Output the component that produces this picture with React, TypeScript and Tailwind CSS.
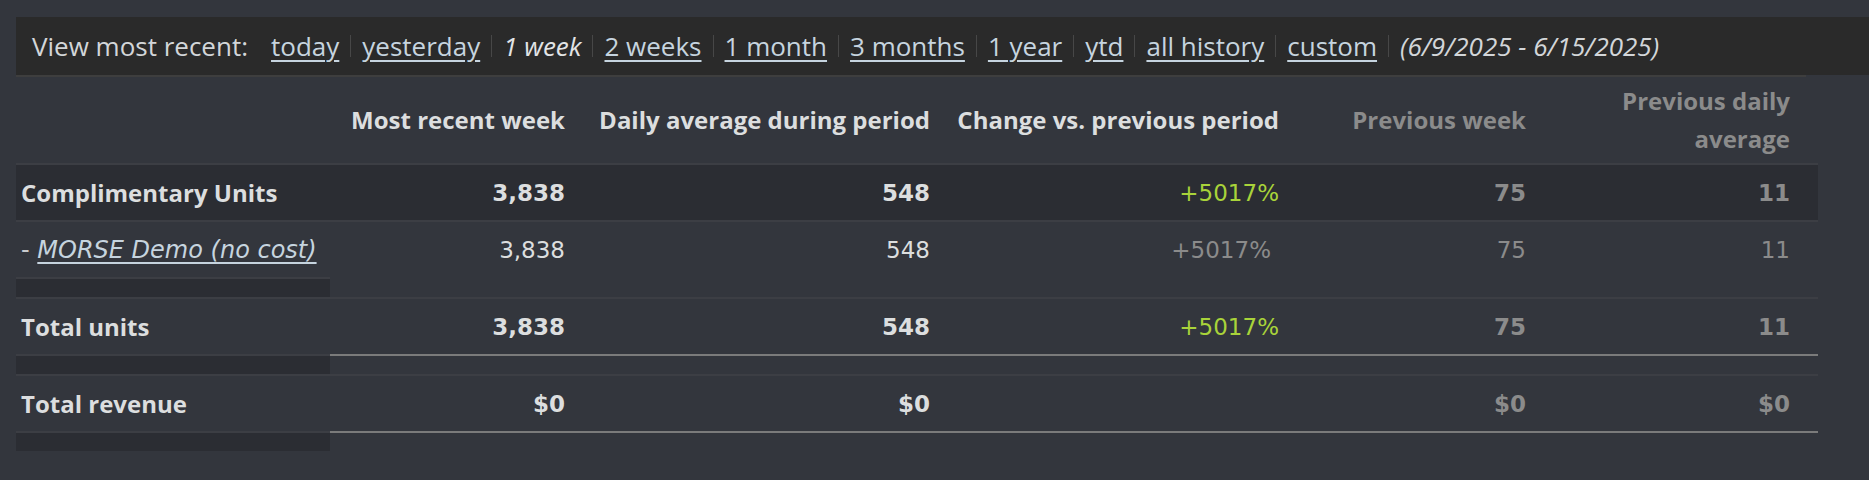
import React from "react";

const ranges = [
  { label: "today", link: true },
  { label: "yesterday", link: true },
  { label: "1 week", link: false },
  { label: "2 weeks", link: true },
  { label: "1 month", link: true },
  { label: "3 months", link: true },
  { label: "1 year", link: true },
  { label: "ytd", link: true },
  { label: "all history", link: true },
  { label: "custom", link: true },
];

const cols = "grid grid-cols-[314px_245px_365px_349px_247px_282px]";
const num = "font-['DejaVu_Sans',_'Open_Sans',_sans-serif] text-[23px]";

type RowProps = {
  label: React.ReactNode;
  values: string[];
  bold?: boolean;
  dark?: boolean;
  subtle?: boolean;
};

function DataRow({ label, values, bold = true, dark = false, subtle = false }: RowProps) {
  const weight = bold ? "font-bold" : "font-normal";
  return (
    <div className={`${cols} h-[57px] items-center border-t-2 border-[#3c3e44] ${dark ? "bg-[#2b2d33]" : ""}`}>
      <div className={`pl-[5px] ${weight} text-[#dcdedf]`}>{label}</div>
      <div className={`pr-[10px] text-right ${num} ${weight} text-[#dcdedf]`}>{values[0]}</div>
      <div className={`pr-[10px] text-right ${num} ${weight} text-[#dcdedf]`}>{values[1]}</div>
      <div
        className={`text-right ${num} font-normal ${subtle ? "pr-[18px] text-[#8b8b8b]" : "pr-[10px] text-[#a9d33a]"}`}
      >
        {values[2]}
      </div>
      <div className={`pr-[10px] text-right ${num} ${weight} text-[#8b8b8b]`}>{values[3]}</div>
      <div className={`pr-[28px] text-right ${num} ${weight} text-[#8b8b8b]`}>{values[4]}</div>
    </div>
  );
}

// strip under a row: only the label column gets the dark fill
function Spacer({ heavy = false }: { heavy?: boolean }) {
  return (
    <div className="flex">
      <div className="w-[314px] border-t-2 border-[#3c3e44] h-[20px] bg-[#2b2d33]" />
      <div className={`flex-1 border-t-2 ${heavy ? "border-[#7b7b7b]" : "border-transparent"}`} />
    </div>
  );
}

export default function App() {
  return (
    <div className="min-h-[480px] bg-[#33363d] pt-[17px] text-[24px] leading-[38px] font-['Open_Sans',_'Liberation_Sans',_sans-serif]">
      {/* range selector */}
      <div className="ml-[16px] flex h-[58px] items-center bg-[#2a2a2a] pl-[16px] text-[26px] text-[#d3d6d9]">
        <span className="mr-[23px]">View most recent:</span>
        {ranges.map((r, i) => (
          <span key={r.label} className="flex items-center">
            {i > 0 && <span className="mx-[11px] h-[22px] w-px bg-[#474747]" />}
            {r.link ? (
              <a href="#" className="text-[#c6d4df] underline decoration-2 underline-offset-[4px]">
                {r.label}
              </a>
            ) : (
              <span className="italic text-[#e2e4e6]">{r.label}</span>
            )}
          </span>
        ))}
        <span className="mx-[11px] h-[22px] w-px bg-[#474747]" />
        <span className="italic text-[#d3d6d9]">(6/9/2025 - 6/15/2025)</span>
      </div>
      <div className="ml-[16px] h-[2px] w-[1790px] bg-[#3e3e3e]" />

      {/* table */}
      <div className="ml-[16px] w-[1802px]">
        <div className={`${cols} h-[86px] items-center font-bold whitespace-nowrap`}>
          <div />
          <div className="pr-[10px] text-right text-[#dcdedf]">Most recent week</div>
          <div className="pr-[10px] text-right text-[#dcdedf]">Daily average during period</div>
          <div className="pr-[10px] text-right text-[#dcdedf]">Change vs. previous period</div>
          <div className="pr-[10px] text-right text-[#8b8b8b]">Previous week</div>
          <div className="pr-[28px] text-right text-[#8b8b8b]">
            Previous daily
            <br />
            average
          </div>
        </div>

        <DataRow label="Complimentary Units" values={["3,838", "548", "+5017%", "75", "11"]} dark />
        <DataRow
          label={
            <span className="font-['DejaVu_Sans',_'Open_Sans',_sans-serif] text-[#c9cbcd]">
              -{" "}
              <a href="#" className="italic text-[#c6d4df] underline decoration-2 underline-offset-[4px]">
                MORSE Demo (no cost)
              </a>
            </span>
          }
          values={["3,838", "548", "+5017%", "75", "11"]}
          bold={false}
          subtle
        />
        <Spacer />
        <DataRow label="Total units" values={["3,838", "548", "+5017%", "75", "11"]} />
        <Spacer heavy />
        <DataRow label="Total revenue" values={["$0", "$0", "", "$0", "$0"]} />
        <Spacer heavy />
      </div>
    </div>
  );
}
